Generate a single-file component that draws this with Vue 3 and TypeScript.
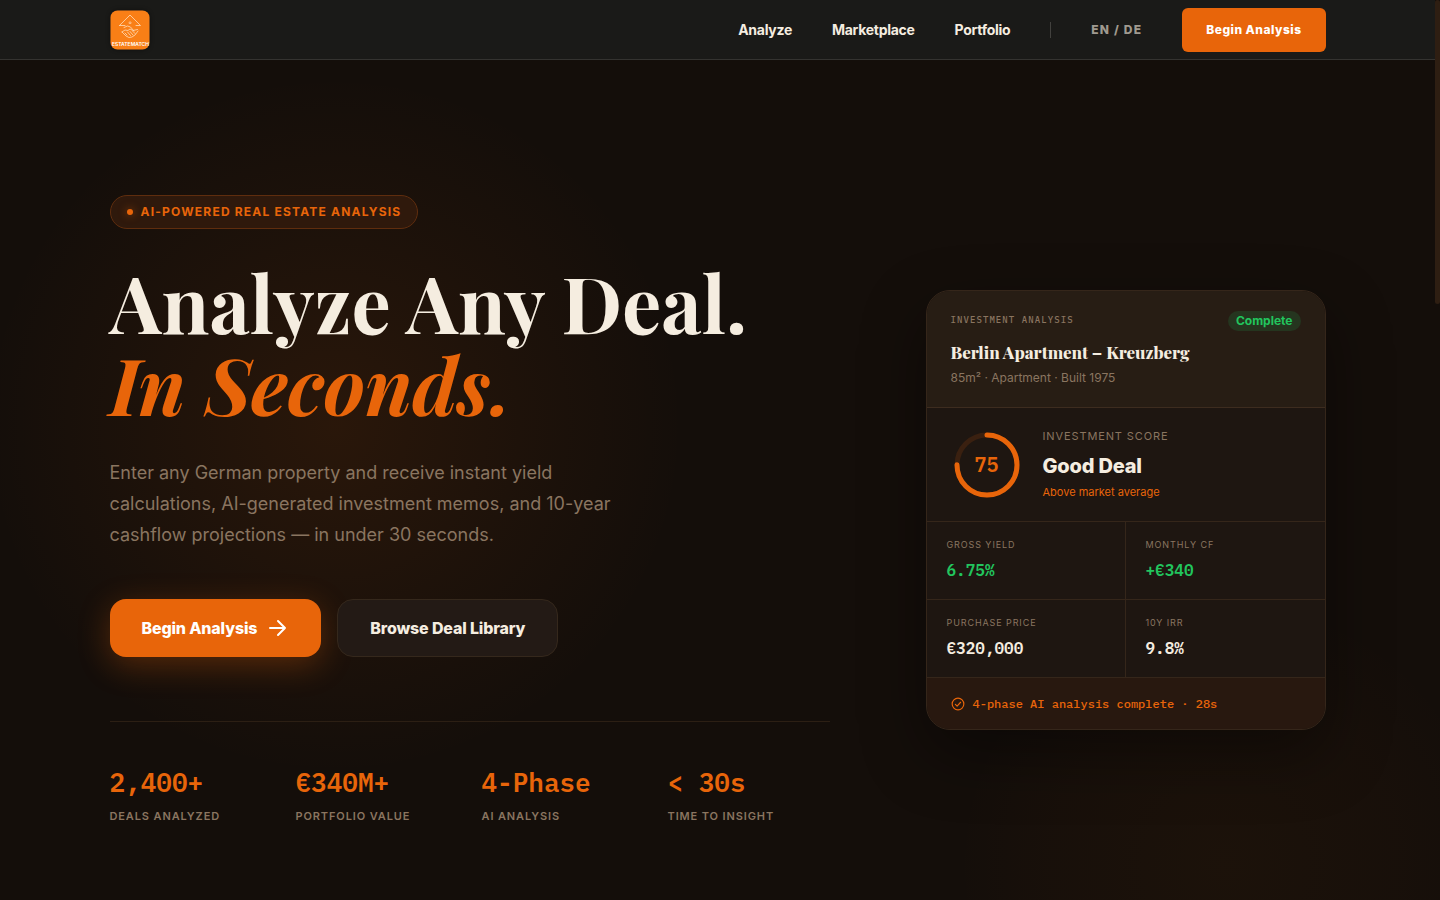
<script setup lang="ts">
interface Stat {
  value: string
  label: string
}
interface Metric extends Stat {
  positive: boolean
}

const navLinks: string[] = ['Analyze', 'Marketplace', 'Portfolio']

const stats: Stat[] = [
  { value: '2,400+', label: 'Deals Analyzed' },
  { value: '€340M+', label: 'Portfolio Value' },
  { value: '4-Phase', label: 'AI Analysis' },
  { value: '< 30s', label: 'Time to Insight' },
]

const metrics: Metric[] = [
  { value: '6.75%', label: 'Gross Yield', positive: true },
  { value: '+€340', label: 'Monthly CF', positive: true },
  { value: '€320,000', label: 'Purchase Price', positive: false },
  { value: '9.8%', label: '10Y IRR', positive: false },
]

const score = 75
const ringLength = 2 * Math.PI * 30
const ringOffset = ringLength * (1 - score / 100)
</script>

<template>
  <div class="page">
    <header class="nav">
      <div class="container nav-row">
        <a class="logo" href="#" aria-label="EstateMatch">
          <svg viewBox="0 0 40 40" width="40" height="40" aria-hidden="true">
            <rect x="0.500" y="0.500" width="39" height="39" rx="7" fill="#f97f16" />
            <g fill="none" stroke="#ffdcb8" stroke-width="0.8" stroke-linejoin="round" stroke-linecap="round">
              <path d="M9.500 15.500 20 5l10.500 10.500h-4.500M9.500 15.500h5.500" />
              <path d="M19.500 12h1.500v1.500h-1.500z" stroke-width="0.600" />
              <path d="M14 17.500l3.500-1.500 3 1 3.500 4M12 22l3-2 3 .5 2-1.500 3 1.500 4.500-1M12 22l4 4 3 1.500 3-.5 3-2 3-4" />
              <path d="M15 23l2 2M17.500 22l3 3.500M20 21.500l3 3.500M22.500 21l2.500 2.500" />
            </g>
            <text x="20.500" y="36" text-anchor="middle" class="logo-text">ESTATEMATCH</text>
          </svg>
        </a>
        <nav class="nav-links">
          <a v-for="link in navLinks" :key="link" href="#">{{ link }}</a>
          <span class="divider"></span>
          <button type="button" class="lang">EN / DE</button>
          <button type="button" class="nav-cta">Begin Analysis</button>
        </nav>
      </div>
    </header>

    <main class="hero">
      <div class="container hero-grid">
        <section>
          <div class="badge"><span class="dot"></span>AI-Powered Real Estate Analysis</div>
          <h1><span>Analyze Any Deal.</span> <em>In Seconds.</em></h1>
          <p class="lead">
            Enter any German property and receive instant yield calculations, AI-generated investment memos, and 10-year
            cashflow projections — in under 30 seconds.
          </p>
          <div class="actions">
            <button type="button" class="btn primary">
              Begin Analysis
              <svg viewBox="0 0 20 20" width="20" height="20" fill="none" stroke="currentColor" stroke-width="2" stroke-linecap="round" stroke-linejoin="round" aria-hidden="true">
                <path d="M1 10h15M9 3l7 7-7 7" />
              </svg>
            </button>
            <button type="button" class="btn secondary">Browse Deal Library</button>
          </div>
          <div class="stats">
            <div v-for="stat in stats" :key="stat.label">
              <div class="stat-value">{{ stat.value }}</div>
              <div class="stat-label">{{ stat.label }}</div>
            </div>
          </div>
        </section>

        <article class="card">
          <div class="card-head">
            <div class="card-top">
              <span class="eyebrow">Investment Analysis</span>
              <span class="status">Complete</span>
            </div>
            <h2>Berlin Apartment – Kreuzberg</h2>
            <p>85m² · Apartment · Built 1975</p>
          </div>
          <div class="score">
            <div class="ring">
              <svg viewBox="0 0 72 72" width="72" height="72" fill="none" stroke-width="5" aria-hidden="true">
                <circle cx="36" cy="36" r="30" stroke="#3a2010" />
                <circle cx="36" cy="36" r="30" stroke="#e8650a" stroke-linecap="round" :stroke-dasharray="ringLength" :stroke-dashoffset="ringOffset" transform="rotate(-90 36 36)" />
              </svg>
              <span>{{ score }}</span>
            </div>
            <div>
              <div class="score-label">Investment Score</div>
              <div class="score-title">Good Deal</div>
              <div class="score-note">Above market average</div>
            </div>
          </div>
          <div class="metrics">
            <div v-for="metric in metrics" :key="metric.label" class="metric">
              <div class="metric-label">{{ metric.label }}</div>
              <div class="metric-value" :class="{ positive: metric.positive }">{{ metric.value }}</div>
            </div>
          </div>
          <div class="card-foot">
            <svg viewBox="0 0 24 24" width="14" height="14" fill="none" stroke="currentColor" stroke-width="2" stroke-linecap="round" stroke-linejoin="round" aria-hidden="true">
              <circle cx="12" cy="12" r="10" />
              <path d="M7.500 12.500l3 3 6-6.500" />
            </svg>
            4-phase AI analysis complete · 28s
          </div>
        </article>
      </div>
    </main>
    <div class="scroll-thumb"></div>
  </div>
</template>

<style>
html,
body {
  background: #140e0a;
}
</style>

<style scoped>
.page {
  --orange: #e8650a;
  --cream: #f5ede0;
  --muted: #8a7560;
  --line: #35261a;
  --sans: Inter, 'Noto Sans', sans-serif;
  --serif: 'Playfair Display', 'Liberation Serif', serif;
  --mono: 'IBM Plex Mono', 'Liberation Mono', monospace;
  box-sizing: border-box;
  min-height: 100vh;
  padding-right: 5px;
  font-family: var(--sans);
  color: var(--cream);
  background:
    radial-gradient(circle 350px at 335px 425px, rgba(232, 101, 10, 0.1), rgba(232, 101, 10, 0.04) 60%, transparent),
    radial-gradient(circle 270px at 1225px 865px, rgba(220, 115, 10, 0.04), rgba(220, 100, 10, 0.02) 65%, transparent),
    #140e0a;
}
.page *,
.page *::before {
  box-sizing: border-box;
}
button {
  font-family: inherit;
  border: 0;
  cursor: pointer;
}
a {
  color: inherit;
  text-decoration: none;
}
h1,
h2,
p {
  margin: 0;
}
.container {
  width: 100%;
  max-width: 1216px;
  margin: 0 auto;
}
.nav {
  display: flex;
  height: 60px;
  background: #1a1a18;
  border-bottom: 1px solid #343330;
}
.nav-row {
  display: flex;
  align-items: center;
  justify-content: space-between;
}
.logo,
.logo svg {
  display: block;
}
.logo {
  border-radius: 8px;
  box-shadow: 0 0 4px rgba(0, 0, 0, 0.4);
}
.logo-text {
  font-size: 5px;
  font-weight: 600;
  fill: #fff;
}
.nav-links {
  display: flex;
  align-items: center;
  gap: 40px;
  font-size: 14px;
  font-weight: 700;
  letter-spacing: -0.02em;
}
.divider {
  width: 1px;
  height: 16px;
  background: #42413e;
}
.lang {
  padding: 0;
  background: none;
  color: #a09a90;
  font-size: 12px;
  font-weight: 800;
  letter-spacing: 0.1em;
}
.nav-cta {
  height: 44px;
  padding: 0 24px;
  border-radius: 6px;
  background: var(--orange);
  color: #fff;
  font-size: 12px;
  font-weight: 800;
  letter-spacing: 0.04em;
}
.hero {
  display: flex;
  align-items: center;
  min-height: calc(100vh - 60px);
  padding-top: 60px;
  box-sizing: border-box;
}
.hero-grid {
  display: grid;
  grid-template-columns: minmax(0, 1fr) 400px;
  gap: 96px;
  align-items: center;
}
.badge {
  display: inline-flex;
  align-items: center;
  gap: 8px;
  height: 34px;
  padding: 0 16px;
  border: 1px solid #5f2d0e;
  border-radius: 17px;
  background: #2f190c;
  color: var(--orange);
  font-size: 12px;
  line-height: 14px;
  font-weight: 700;
  letter-spacing: 0.1em;
  text-transform: uppercase;
  vertical-align: top;
}
.dot {
  width: 6px;
  height: 6px;
  border-radius: 50%;
  background: var(--orange);
  box-shadow: 0 0 8px rgba(232, 101, 10, 0.6);
}
h1 {
  margin-top: 32px;
  font-family: var(--serif);
  font-size: 78px;
  line-height: 82px;
  font-weight: 700;
  white-space: nowrap;
}
h1 span,
h1 em {
  display: block;
}
h1 em {
  color: var(--orange);
}
.lead {
  max-width: 520px;
  margin-top: 32px;
  color: var(--muted);
  font-size: 18px;
  line-height: 31px;
}
.actions {
  display: flex;
  gap: 16px;
  margin-top: 49px;
}
.btn {
  display: flex;
  align-items: center;
  gap: 12px;
  height: 58px;
  padding: 0 32px;
  border-radius: 16px;
  font-size: 16px;
  font-weight: 800;
  letter-spacing: -0.01em;
}
.primary {
  background: var(--orange);
  color: #fff;
  box-shadow: 0 8px 32px rgba(232, 101, 10, 0.3);
}
.secondary {
  border: 1px solid #35281c;
  background: #231a15;
  color: var(--cream);
}
.stats {
  display: grid;
  grid-template-columns: repeat(4, 1fr);
  gap: 24px;
  margin-top: 64px;
  padding-top: 42px;
  border-top: 1px solid #2c1f14;
}
.stat-value {
  color: var(--orange);
  font-family: var(--mono);
  font-size: 26px;
  line-height: 36px;
  font-weight: 600;
}
.stat-label {
  margin-top: 7px;
  color: var(--muted);
  font-size: 11px;
  line-height: 18px;
  font-weight: 600;
  letter-spacing: 0.08em;
  text-transform: uppercase;
}
.card {
  overflow: hidden;
  border: 1px solid var(--line);
  border-radius: 24px;
  background: #1e1611;
  box-shadow: 0 24px 64px rgba(0, 0, 0, 0.4);
}
.card-head {
  padding: 20px 24px;
  border-bottom: 1px solid #3d2c1f;
  background: #271d14;
}
.card-top {
  display: flex;
  justify-content: space-between;
  height: 20px;
}
.eyebrow {
  color: var(--muted);
  font-family: var(--mono);
  font-size: 9px;
  line-height: 18px;
  font-weight: 500;
  letter-spacing: 0.12em;
  text-transform: uppercase;
}
.status {
  padding: 0 8px;
  border-radius: 10px;
  background: #25351f;
  color: #22c55e;
  font-size: 12px;
  line-height: 20px;
  font-weight: 700;
}
h2 {
  margin-top: 8px;
  font-family: var(--serif);
  font-size: 17px;
  line-height: 26px;
  font-weight: 800;
}
.card-head p {
  margin-top: 4px;
  color: var(--muted);
  font-size: 12px;
  line-height: 18px;
}
.score {
  display: flex;
  align-items: center;
  gap: 20px;
  padding: 20px 24px;
  border-bottom: 1px solid var(--line);
}
.ring {
  display: grid;
  place-items: center;
}
.ring > * {
  grid-area: 1 / 1;
}
.ring span {
  color: var(--orange);
  font-family: var(--mono);
  font-size: 20px;
  line-height: 24px;
  font-weight: 600;
}
.score-label {
  color: var(--muted);
  font-size: 11px;
  line-height: 16px;
  letter-spacing: 0.08em;
  text-transform: uppercase;
}
.score-title {
  margin: 6px 0 2px;
  font-size: 20px;
  line-height: 32px;
  font-weight: 800;
  letter-spacing: -0.01em;
}
.score-note {
  color: var(--orange);
  font-size: 11px;
  line-height: 17px;
}
.metrics {
  display: grid;
  grid-template-columns: 1fr 1fr;
}
.metric {
  padding: 16px 20px;
  border-bottom: 1px solid var(--line);
}
.metric:nth-child(odd) {
  border-right: 1px solid var(--line);
}
.metric-label {
  color: var(--muted);
  font-size: 9px;
  line-height: 14px;
  letter-spacing: 0.1em;
  text-transform: uppercase;
}
.metric-value {
  margin-top: 6px;
  font-family: var(--mono);
  font-size: 16px;
  line-height: 25px;
  font-weight: 600;
}
.positive {
  color: #22c55e;
}
.card-foot {
  display: flex;
  align-items: center;
  gap: 8px;
  padding: 16px 24px;
  background: #28180f;
  color: var(--orange);
  font-family: var(--mono);
  font-size: 12px;
  line-height: 19px;
  font-weight: 500;
}
.scroll-thumb {
  position: fixed;
  top: 0;
  right: 0;
  width: 5px;
  height: 304px;
  border-radius: 3px;
  background: #2e1e12;
}
</style>
